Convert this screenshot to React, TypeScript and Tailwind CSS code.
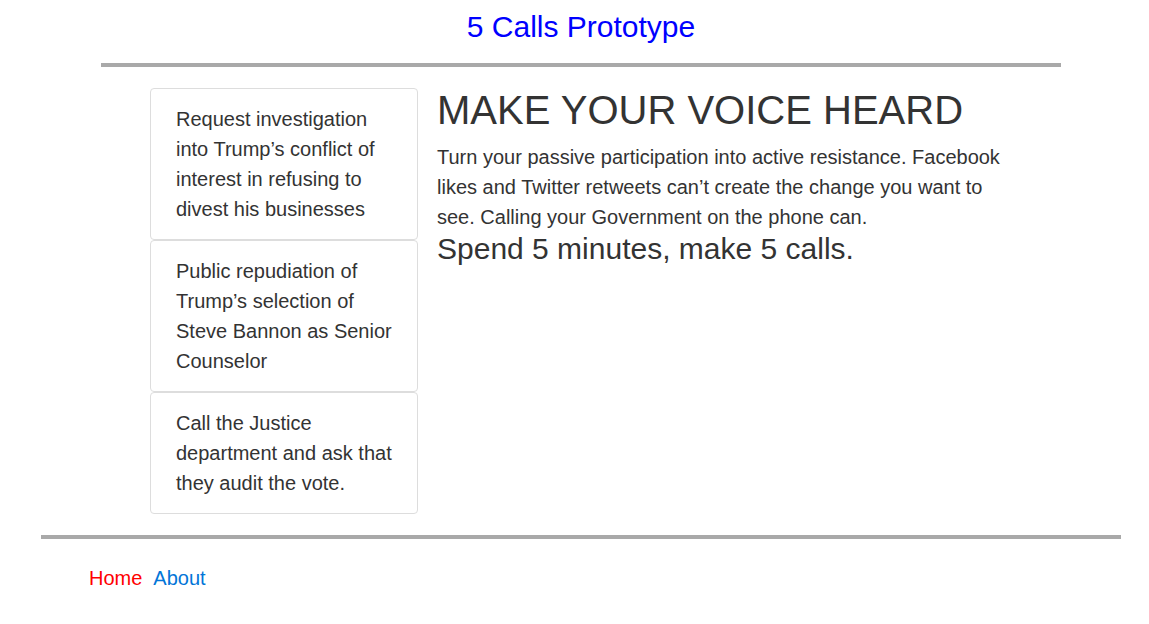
const issues = [
  "Request investigation into Trump’s conflict of interest in refusing to divest his businesses",
  "Public repudiation of Trump’s selection of Steve Bannon as Senior Counselor",
  "Call the Justice department and ask that they audit the vote.",
];

function IssueCard({ text }: { text: string }) {
  return (
    <div className="border border-[#dddddd] rounded-[4px] px-[25px] py-[15px] text-[20px] leading-[30px] text-[#333333]">
      {text}
    </div>
  );
}

export default function App() {
  return (
    <div className="font-['Liberation_Sans',Arial,sans-serif] text-[#333333] bg-white min-h-screen">
      <header className="pt-[10px]">
        <h1 className="ml-[101px] w-[960px] text-center text-[30px] leading-[33px] text-[#0000ff]">
          5 Calls Prototype
        </h1>
        <div className="ml-[101px] w-[960px] h-[4px] bg-[#a9a9a9] mt-[20px]"></div>
      </header>

      <main className="flex ml-[150px] mt-[21px]">
        <div className="w-[268px] flex flex-col">
          {issues.map((issue) => (
            <IssueCard key={issue} text={issue} />
          ))}
        </div>
        <div className="ml-[19px] w-[580px]">
          <h2 className="text-[40px] leading-[44px]">MAKE YOUR VOICE HEARD</h2>
          <p className="mt-[10px] text-[20px] leading-[30px]">
            Turn your passive participation into active resistance. Facebook likes and Twitter
            retweets can’t create the change you want to see. Calling your Government on the phone
            can.
          </p>
          <p className="text-[30px] leading-[33px]">Spend 5 minutes, make 5 calls.</p>
        </div>
      </main>

      <footer className="mt-[21px]">
        <div className="ml-[41px] w-[1080px] h-[4px] bg-[#a9a9a9]"></div>
        <nav className="flex gap-[11px] ml-[89px] mt-[24px] text-[20px] leading-[30px]">
          <a href="#" className="text-[#ff0000]">Home</a>
          <a href="#" className="text-[#0275d8]">About</a>
        </nav>
      </footer>
    </div>
  );
}
